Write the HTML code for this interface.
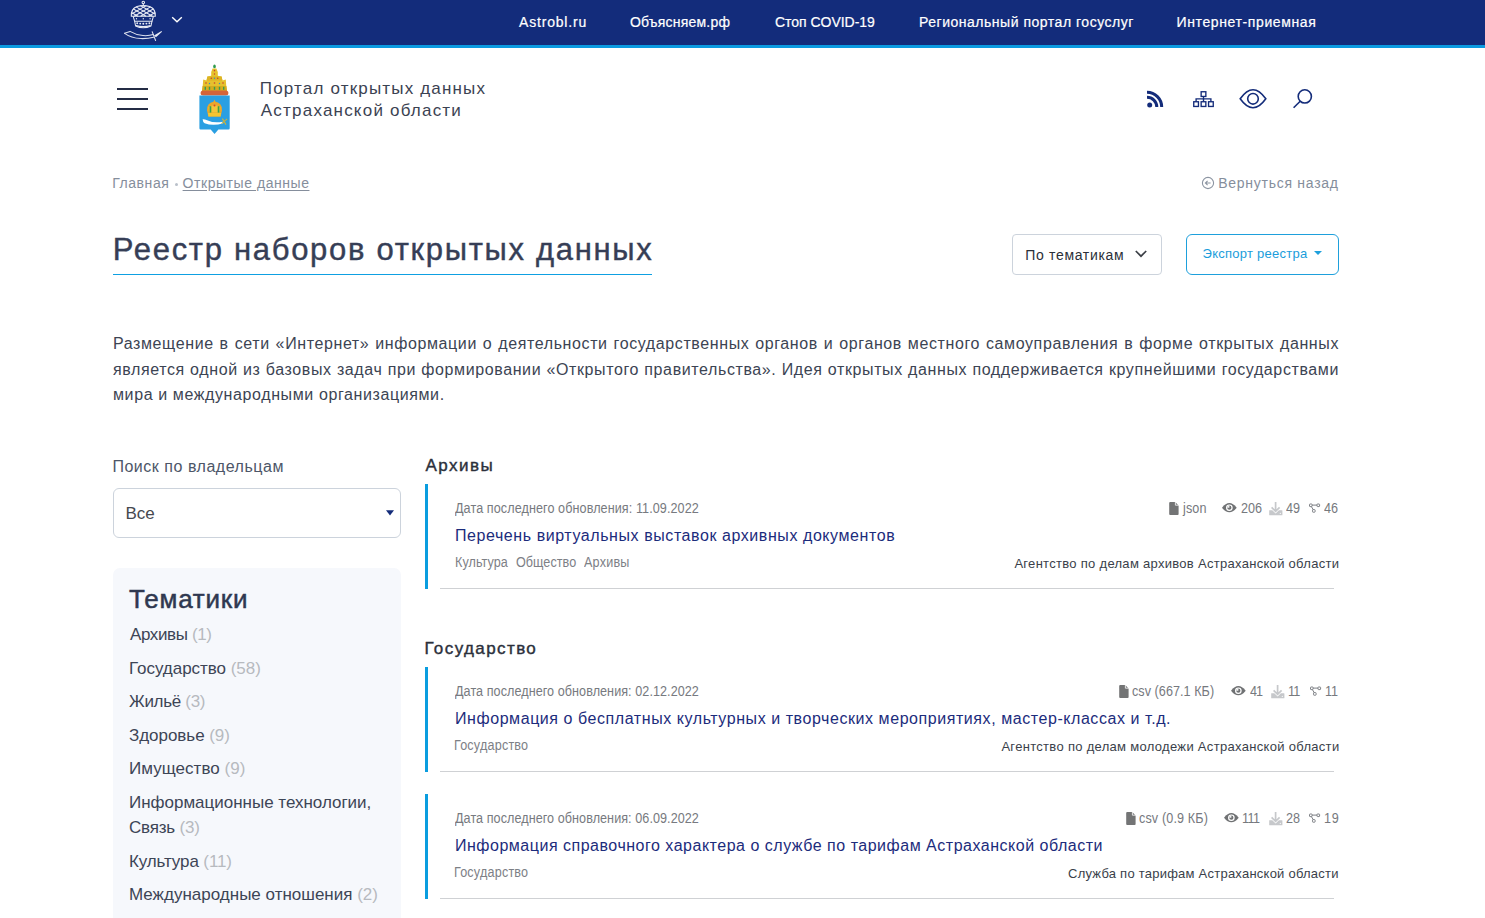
<!DOCTYPE html>
<html lang="ru">
<head>
<meta charset="utf-8">
<title>Реестр наборов открытых данных</title>
<style>
*{box-sizing:border-box;margin:0;padding:0}
html,body{width:1485px;height:918px;overflow:hidden;background:#fff}
body{font-family:"Liberation Sans",sans-serif;position:relative;color:#3a4352}
.ab{position:absolute}
.tx{position:absolute;white-space:nowrap;line-height:1}
.pl{position:absolute;left:113px;white-space:nowrap;font-size:16px;line-height:1;color:#3c4453}
</style>
</head>
<body>
<div class="ab" style="left:0;top:0;width:1485px;height:45px;background:#132c7b"></div>
<div class="ab" style="left:0;top:45px;width:1485px;height:3px;background:#0b9ae0"></div>
<svg class="ab" style="left:110px;top:0" width="60" height="44" viewBox="110 0 60 44">
 <g fill="none" stroke="#e8ebf4" stroke-width="1.05">
  <circle cx="143.3" cy="2.5" r="1.25"/>
  <path d="M143.3 3.8 V5.6"/>
  <path d="M131.3 16.3 Q130.8 9 137 6.6 Q143.3 4.6 149.6 6.6 Q155.8 9 155.3 16.3 Z"/>
  <path d="M133 8.8 L146 16.3 M136 6.9 L152.5 16.3 M140.5 5.6 L155 14 M131.5 12.5 L138 16.3"/>
  <path d="M153.6 8.8 L140.6 16.3 M150.6 6.9 L134.1 16.3 M146.1 5.6 L131.6 14 M155.1 12.5 L148.6 16.3"/>
  <path d="M133.2 16.3 L134.6 21.2 H152 L153.4 16.3"/>
  <path d="M134.6 21.2 L135.6 26 Q143.3 29.6 151 26 L152 21.2"/>
  <path d="M136 25.5 Q143.3 27.8 150.6 25.5"/>
 </g>
 <g fill="#e8ebf4">
  <circle cx="137.2" cy="23.3" r="0.95"/><circle cx="140.2" cy="23.6" r="0.95"/><circle cx="143.3" cy="23.7" r="0.95"/><circle cx="146.4" cy="23.6" r="0.95"/><circle cx="149.4" cy="23.3" r="0.95"/>
  <circle cx="136.5" cy="18.8" r="0.7"/><circle cx="143.3" cy="18.8" r="0.7"/><circle cx="150.1" cy="18.8" r="0.7"/>
 </g>
 <g fill="none" stroke="#dde1ee" stroke-width="1.05" stroke-linecap="round" stroke-linejoin="round">
  <path d="M124.6 33.3 Q131 38 141 38.6 Q148 38.8 153.5 37.2"/>
  <path d="M124.6 33.3 L130 31.4 Q136 35 143 35.6 Q149 36 153.2 34.6"/>
  <path d="M152.2 31.8 L155.6 40.5"/>
 </g>
 <path d="M154 35.5 L161.5 31 L162 31.8 L156 37.3Z" fill="#e8ebf4"/>
</svg>
<svg class="ab" style="left:171px;top:16px" width="12" height="8" viewBox="0 0 12 8"><path d="M1.2 1.2 L6 5.8 L10.8 1.2" fill="none" stroke="#fff" stroke-width="1.4"/></svg>
<div class="ab" style="left:117px;top:88px;width:31px;height:2px;background:#242c45"></div>
<div class="ab" style="left:117px;top:98px;width:31px;height:2px;background:#242c45"></div>
<div class="ab" style="left:117px;top:108px;width:31px;height:2px;background:#242c45"></div>
<svg class="ab" style="left:196px;top:62px" width="38" height="74" viewBox="0 0 38 74">
  <ellipse cx="18.5" cy="4.4" rx="1.3" ry="1.9" fill="#2f9a4d"/>
  <path d="M16.6 6.6 H20.4 L21.8 10 V13.8 L25.6 14.5 L26.5 18.5 L29.8 17.6 L30.2 23 L31 29 H6 L6.8 23 L7.2 17.6 L10.5 18.5 L11.4 14.5 L15.2 13.8 V10 Z" fill="#e6c12e"/>
  <path d="M6.6 24 H30.4 L31 29 H6Z" fill="#d5ac20"/>
  <path d="M11.4 14.5 H25.6 L26.5 18.6 H10.5Z" fill="#dcb425"/>
  <g fill="#c8402c"><circle cx="18.5" cy="8.6" r="0.8"/><circle cx="15.3" cy="16.2" r="0.8"/><circle cx="21.7" cy="16.2" r="0.8"/><circle cx="10" cy="21" r="0.8"/><circle cx="27" cy="21" r="0.8"/><circle cx="18.5" cy="21" r="0.8"/><circle cx="18.5" cy="12" r="0.7"/></g>
  <g fill="#2f8fd0"><circle cx="13.5" cy="21.5" r="0.7"/><circle cx="23.5" cy="21.5" r="0.7"/><circle cx="18.5" cy="16.2" r="0.7"/></g>
  <g fill="#3a9d4a"><rect x="8.6" y="24.8" width="1.4" height="3"/><rect x="12.8" y="24.8" width="1.4" height="3"/><rect x="17.8" y="24.8" width="1.4" height="3"/><rect x="22.8" y="24.8" width="1.4" height="3"/><rect x="27" y="24.8" width="1.4" height="3"/></g>
  <rect x="4.6" y="28.6" width="27.8" height="5" rx="2.5" fill="#d4643a"/>
  <path d="M3.4 33.5 H33.7 V66.2 Q33.7 67.4 32.5 67.4 H22.4 L18.55 72 L14.7 67.4 H4.6 Q3.4 67.4 3.4 66.2 Z" fill="#2a9fe2"/>
  <path d="M11 48.5 Q10.6 40.5 18.5 39.6 Q26.4 40.5 26 48.5 L24.6 54.6 H12.4 Z" fill="#eaa62a"/>
  <path d="M12.6 45 Q18.5 41.5 24.4 45 L23.8 50.5 H13.2Z" fill="#f2c53a"/>
  <path d="M18.5 37.6 L19.6 40 H17.4Z" fill="#eaa62a"/>
  <g fill="#3aa046"><rect x="13.6" y="44.2" width="1.7" height="6.4"/><rect x="21.7" y="44.2" width="1.7" height="6.4"/></g>
  <circle cx="18.5" cy="43.6" r="1" fill="#d6452d"/>
  <path d="M12 51 H25 L24.6 54.6 H12.4Z" fill="#f4c531"/>
  <path d="M6.6 57.2 Q8 57 9 57.6 Q17 61.5 26.6 59.8 L27.2 61.2 Q17 64.5 8.6 61.2 Q6.8 60 6.6 57.2Z" fill="#ffffff"/>
  <path d="M26.4 56.6 L30 62.6 M25.6 61.6 L31.2 56.8" stroke="#c9b23c" stroke-width="1.1"/>
</svg>
<svg class="ab" style="left:1140px;top:84px" width="30" height="30" viewBox="0 0 30 30">
  <circle cx="9.7" cy="20.9" r="2.5" fill="#142c7a"/>
  <path d="M7 13.2 A9.8 9.8 0 0 1 16.8 23" fill="none" stroke="#142c7a" stroke-width="3"/>
  <path d="M7 8.3 A14.7 14.7 0 0 1 21.7 23" fill="none" stroke="#142c7a" stroke-width="3"/>
</svg>
<svg class="ab" style="left:1190px;top:88px" width="28" height="22" viewBox="0 0 28 22">
  <g fill="none" stroke="#142c7a" stroke-width="1.35">
  <rect x="11.15" y="3.75" width="4.7" height="4.7"/>
  <rect x="3.75" y="13.75" width="4.7" height="4.7"/>
  <rect x="11.15" y="13.75" width="4.7" height="4.7"/>
  <rect x="18.55" y="13.75" width="4.7" height="4.7"/>
  <path d="M13.5 8.5 V13.75 M6.1 13.75 V10.9 H20.9 V13.75"/>
  </g>
</svg>
<svg class="ab" style="left:1236px;top:84px" width="34" height="30" viewBox="0 0 34 30">
  <path d="M4.2 14.8 Q17 -3.2 29.8 14.8 Q17 32.8 4.2 14.8 Z" fill="none" stroke="#142c7a" stroke-width="1.6"/>
  <circle cx="17" cy="14.8" r="5.3" fill="none" stroke="#142c7a" stroke-width="1.6"/>
</svg>
<svg class="ab" style="left:1288px;top:84px" width="30" height="30" viewBox="0 0 30 30">
  <circle cx="16.8" cy="12.4" r="6.6" fill="none" stroke="#142c7a" stroke-width="1.6"/>
  <path d="M12.2 17.2 L5.6 23.8" stroke="#142c7a" stroke-width="1.6"/>
</svg>
<div class="ab" style="left:174.5px;top:182.5px;width:3.5px;height:3.5px;border-radius:50%;background:#b9c0ca"></div>
<svg class="ab" style="left:1201px;top:176px" width="14" height="14" viewBox="0 0 14 14"><circle cx="7" cy="7" r="5.6" fill="none" stroke="#8c95a2" stroke-width="1.1"/><path d="M9.6 7 H4.4 M6.6 4.8 L4.4 7 L6.6 9.2" fill="none" stroke="#8c95a2" stroke-width="1.1"/></svg>
<div class="ab" style="left:113px;top:273.5px;width:539px;height:1.3px;background:#0ea0e2"></div>
<div class="ab" style="left:1012px;top:234px;width:150px;height:41px;border:1px solid #ccd3dc;border-radius:4px"></div>
<svg class="ab" style="left:1134px;top:249px" width="14" height="10" viewBox="0 0 14 10"><path d="M1.8 2 L7 7.2 L12.2 2" fill="none" stroke="#3b3f46" stroke-width="1.7"/></svg>
<div class="ab" style="left:1186px;top:234px;width:153px;height:41px;border:1px solid #1ea0dc;border-radius:6px"></div>
<svg class="ab" style="left:1313px;top:250px" width="10" height="6" viewBox="0 0 10 6"><path d="M1 1 H9 L5 5 Z" fill="#1ea0dc"/></svg>
<div class="pl" style="top:336.2px;width:1226px;text-align:justify;text-align-last:justify;letter-spacing:0.606px">Размещение в сети «Интернет» информации о деятельности государственных органов и органов местного самоуправления в форме открытых данных</div>
<div class="pl" style="top:361.6px;width:1226px;text-align:justify;text-align-last:justify;letter-spacing:0.606px">является одной из базовых задач при формировании «Открытого правительства». Идея открытых данных поддерживается крупнейшими государствами</div>
<div id="para3" class="pl" style="top:387.0px;letter-spacing:0.606px">мира и международными организациями.</div>
<div class="ab" style="left:113px;top:488px;width:288px;height:50px;border:1px solid #ccd3dc;border-radius:6px"></div>
<svg class="ab" style="left:385px;top:509px" width="10" height="8" viewBox="0 0 10 8"><path d="M1 1.2 H9 L5 6.5 Z" fill="#142c7a"/></svg>
<div class="ab" style="left:113px;top:568px;width:288px;height:400px;background:#f6f8fc;border-radius:7px"></div>
<div class="ab" style="left:425px;top:484px;width:3px;height:105px;background:#0a9ddf"></div>
<div class="ab" style="left:440px;top:588px;width:894px;height:1px;background:#cfd1d4"></div>
<div class="ab" style="left:425px;top:667px;width:3px;height:105px;background:#0a9ddf"></div>
<div class="ab" style="left:440px;top:771px;width:894px;height:1px;background:#cfd1d4"></div>
<div class="ab" style="left:425px;top:794px;width:3px;height:105px;background:#0a9ddf"></div>
<div class="ab" style="left:440px;top:898px;width:894px;height:1px;background:#cfd1d4"></div>
<svg class="ab" style="left:1168.3px;top:500.8px" width="12" height="15" viewBox="0 0 12 15"><path d="M2.2 1 H7.2 L10.6 4.4 V12.9 Q10.6 13.9 9.6 13.9 H2.2 Q1.2 13.9 1.2 12.9 V2 Q1.2 1 2.2 1Z" fill="#737475"/><path d="M7.4 0.6 V4.2 H11" fill="none" stroke="#fff" stroke-width="0.8"/></svg>
<svg class="ab" style="left:1221.0px;top:501.3px" width="17" height="13" viewBox="0 0 17 13"><path d="M1 6.7 Q8.35 -2.6 15.7 6.7 Q8.35 16 1 6.7Z" fill="#707274"/><circle cx="8.35" cy="6.7" r="3.3" fill="#fff"/><circle cx="8.35" cy="6.7" r="2.1" fill="#707274"/><path d="M8.35 6.7 V4.6 A2.1 2.1 0 0 0 6.25 6.7Z" fill="#fff" opacity="0.9"/></svg>
<svg class="ab" style="left:1268.0px;top:500.5px" width="16" height="16" viewBox="0 0 16 16"><path d="M7.6 1 V10.2 M3.6 6.4 L7.6 10.3 L11.6 6.4" fill="none" stroke="#c6c8cb" stroke-width="1.7"/><path d="M1.3 9.3 H4.3 L7.6 12.4 L10.9 9.3 H14 Q14.4 9.3 14.4 9.8 V14 Q14.4 14.3 14 14.3 H1.7 Q1.2 14.3 1.2 14 V9.8 Q1.2 9.3 1.3 9.3Z" fill="#c6c8cb"/><circle cx="12.3" cy="12.4" r="0.55" fill="#fff"/></svg>
<svg class="ab" style="left:1307.9px;top:503.0px" width="13" height="11" viewBox="0 0 13 11"><g fill="none" stroke="#76797e" stroke-width="0.95"><rect x="1.5" y="1" width="2.6" height="2.6" rx="0.6"/><rect x="9" y="1" width="2.6" height="2.6" rx="0.6"/><rect x="4.5" y="6.6" width="2.6" height="2.6" rx="0.6"/><path d="M4.1 2.1 H9 M3.4 3.6 L5.2 6.6"/></g></svg>
<svg class="ab" style="left:1118.0px;top:683.8px" width="12" height="15" viewBox="0 0 12 15"><path d="M2.2 1 H7.2 L10.6 4.4 V12.9 Q10.6 13.9 9.6 13.9 H2.2 Q1.2 13.9 1.2 12.9 V2 Q1.2 1 2.2 1Z" fill="#737475"/><path d="M7.4 0.6 V4.2 H11" fill="none" stroke="#fff" stroke-width="0.8"/></svg>
<svg class="ab" style="left:1230.2px;top:684.3px" width="17" height="13" viewBox="0 0 17 13"><path d="M1 6.7 Q8.35 -2.6 15.7 6.7 Q8.35 16 1 6.7Z" fill="#707274"/><circle cx="8.35" cy="6.7" r="3.3" fill="#fff"/><circle cx="8.35" cy="6.7" r="2.1" fill="#707274"/><path d="M8.35 6.7 V4.6 A2.1 2.1 0 0 0 6.25 6.7Z" fill="#fff" opacity="0.9"/></svg>
<svg class="ab" style="left:1269.8px;top:683.5px" width="16" height="16" viewBox="0 0 16 16"><path d="M7.6 1 V10.2 M3.6 6.4 L7.6 10.3 L11.6 6.4" fill="none" stroke="#c6c8cb" stroke-width="1.7"/><path d="M1.3 9.3 H4.3 L7.6 12.4 L10.9 9.3 H14 Q14.4 9.3 14.4 9.8 V14 Q14.4 14.3 14 14.3 H1.7 Q1.2 14.3 1.2 14 V9.8 Q1.2 9.3 1.3 9.3Z" fill="#c6c8cb"/><circle cx="12.3" cy="12.4" r="0.55" fill="#fff"/></svg>
<svg class="ab" style="left:1308.9px;top:686.0px" width="13" height="11" viewBox="0 0 13 11"><g fill="none" stroke="#76797e" stroke-width="0.95"><rect x="1.5" y="1" width="2.6" height="2.6" rx="0.6"/><rect x="9" y="1" width="2.6" height="2.6" rx="0.6"/><rect x="4.5" y="6.6" width="2.6" height="2.6" rx="0.6"/><path d="M4.1 2.1 H9 M3.4 3.6 L5.2 6.6"/></g></svg>
<svg class="ab" style="left:1125.1px;top:810.8px" width="12" height="15" viewBox="0 0 12 15"><path d="M2.2 1 H7.2 L10.6 4.4 V12.9 Q10.6 13.9 9.6 13.9 H2.2 Q1.2 13.9 1.2 12.9 V2 Q1.2 1 2.2 1Z" fill="#737475"/><path d="M7.4 0.6 V4.2 H11" fill="none" stroke="#fff" stroke-width="0.8"/></svg>
<svg class="ab" style="left:1223.0px;top:811.3px" width="17" height="13" viewBox="0 0 17 13"><path d="M1 6.7 Q8.35 -2.6 15.7 6.7 Q8.35 16 1 6.7Z" fill="#707274"/><circle cx="8.35" cy="6.7" r="3.3" fill="#fff"/><circle cx="8.35" cy="6.7" r="2.1" fill="#707274"/><path d="M8.35 6.7 V4.6 A2.1 2.1 0 0 0 6.25 6.7Z" fill="#fff" opacity="0.9"/></svg>
<svg class="ab" style="left:1268.1px;top:810.5px" width="16" height="16" viewBox="0 0 16 16"><path d="M7.6 1 V10.2 M3.6 6.4 L7.6 10.3 L11.6 6.4" fill="none" stroke="#c6c8cb" stroke-width="1.7"/><path d="M1.3 9.3 H4.3 L7.6 12.4 L10.9 9.3 H14 Q14.4 9.3 14.4 9.8 V14 Q14.4 14.3 14 14.3 H1.7 Q1.2 14.3 1.2 14 V9.8 Q1.2 9.3 1.3 9.3Z" fill="#c6c8cb"/><circle cx="12.3" cy="12.4" r="0.55" fill="#fff"/></svg>
<svg class="ab" style="left:1308.2px;top:813.0px" width="13" height="11" viewBox="0 0 13 11"><g fill="none" stroke="#76797e" stroke-width="0.95"><rect x="1.5" y="1" width="2.6" height="2.6" rx="0.6"/><rect x="9" y="1" width="2.6" height="2.6" rx="0.6"/><rect x="4.5" y="6.6" width="2.6" height="2.6" rx="0.6"/><path d="M4.1 2.1 H9 M3.4 3.6 L5.2 6.6"/></g></svg>
<div id="n1" class="tx" style="left:519.00px;top:15px;font-size:14px;color:#fff;letter-spacing:0.810px;-webkit-text-stroke:0.2px #fff;">Astrobl.ru</div>
<div id="n2" class="tx" style="left:630.00px;top:15px;font-size:14px;color:#fff;letter-spacing:0.208px;-webkit-text-stroke:0.2px #fff;">Объясняем.рф</div>
<div id="n3" class="tx" style="left:775.00px;top:15px;font-size:14px;color:#fff;letter-spacing:-0.033px;-webkit-text-stroke:0.2px #fff;">Стоп COVID-19</div>
<div id="n4" class="tx" style="left:919.00px;top:15px;font-size:14px;color:#fff;letter-spacing:0.518px;-webkit-text-stroke:0.2px #fff;">Региональный портал госуслуг</div>
<div id="n5" class="tx" style="left:1176.60px;top:15px;font-size:14px;color:#fff;letter-spacing:0.609px;-webkit-text-stroke:0.2px #fff;">Интернет-приемная</div>
<div id="lg1" class="tx" style="left:259.80px;top:79.6px;font-size:17px;color:#3b4252;letter-spacing:1.175px;">Портал открытых данных</div>
<div id="lg2" class="tx" style="left:260.80px;top:101.8px;font-size:17px;color:#3b4252;letter-spacing:1.210px;">Астраханской области</div>
<div id="bc1" class="tx" style="left:112.20px;top:176px;font-size:14px;color:#858e9c;letter-spacing:0.560px;">Главная</div>
<div id="bc2" class="tx" style="left:182.60px;top:176px;font-size:14px;color:#858e9c;letter-spacing:0.545px;text-decoration:underline;text-underline-offset:1.5px;">Открытые данные</div>
<div id="bc3" class="tx" style="left:1218.20px;top:175.8px;font-size:14px;color:#858e9c;letter-spacing:0.734px;">Вернуться назад</div>
<div id="h1" class="tx" style="left:112.80px;top:234.3px;font-size:31px;color:#363e56;letter-spacing:1.688px;-webkit-text-stroke:0.4px #363e56;">Реестр наборов открытых данных</div>
<div id="selt" class="tx" style="left:1025.20px;top:248.2px;font-size:14px;color:#2a2f38;letter-spacing:0.685px;">По тематикам</div>
<div id="expt" class="tx" style="left:1202.60px;top:247px;font-size:13px;color:#1a9ddb;letter-spacing:0.247px;">Экспорт реестра</div>
<div id="lbl" class="tx" style="left:112.40px;top:458.7px;font-size:16px;color:#4d5668;letter-spacing:0.526px;">Поиск по владельцам</div>
<div id="all" class="tx" style="left:125.60px;top:505.3px;font-size:17px;color:#46494f;letter-spacing:-0.131px;">Все</div>
<div id="them" class="tx" style="left:129.00px;top:586.2px;font-size:26px;color:#2f3850;letter-spacing:0.793px;-webkit-text-stroke:0.5px #2f3850;">Тематики</div>
<div id="ti0" class="tx" style="left:130.00px;top:626.3px;font-size:17px;color:#3d4556;letter-spacing:-0.370px;">Архивы <span style="color:#b7babf">(1)</span></div>
<div id="ti1" class="tx" style="left:129.00px;top:659.8px;font-size:17px;color:#3d4556;letter-spacing:-0.031px;">Государство <span style="color:#b7babf">(58)</span></div>
<div id="ti2" class="tx" style="left:129.00px;top:692.6px;font-size:17px;color:#3d4556;letter-spacing:-0.311px;">Жильё <span style="color:#b7babf">(3)</span></div>
<div id="ti3" class="tx" style="left:129.00px;top:726.9px;font-size:17px;color:#3d4556;letter-spacing:-0.041px;">Здоровье <span style="color:#b7babf">(9)</span></div>
<div id="ti4" class="tx" style="left:129.00px;top:759.5px;font-size:17px;color:#3d4556;letter-spacing:0.038px;">Имущество <span style="color:#b7babf">(9)</span></div>
<div id="ti5" class="tx" style="left:129.00px;top:794px;font-size:17px;color:#3d4556;letter-spacing:-0.013px;">Информационные технологии,</div>
<div id="ti6" class="tx" style="left:129.00px;top:818.6px;font-size:17px;color:#3d4556;letter-spacing:-0.200px;">Связь <span style="color:#b7babf">(3)</span></div>
<div id="ti7" class="tx" style="left:129.00px;top:853.1px;font-size:17px;color:#3d4556;letter-spacing:-0.116px;">Культура <span style="color:#b7babf">(11)</span></div>
<div id="ti8" class="tx" style="left:129.00px;top:886.1px;font-size:17px;color:#3d4556;letter-spacing:0.004px;">Международные отношения <span style="color:#b7babf">(2)</span></div>
<div id="sec1" class="tx" style="left:425.40px;top:456.8px;font-size:17px;color:#2b303b;letter-spacing:1.501px;-webkit-text-stroke:0.4px #2b303b;">Архивы</div>
<div id="sec2" class="tx" style="left:424.40px;top:639.8px;font-size:17px;color:#2b303b;letter-spacing:1.407px;-webkit-text-stroke:0.4px #2b303b;">Государство</div>
<div id="c0dt" class="tx" style="left:455.00px;top:501.2px;font-size:14px;color:#777a80;letter-spacing:0.094px;transform:scaleX(0.9);transform-origin:0 0;">Дата последнего обновления: 11.09.2022</div>
<div id="c0tt" class="tx" style="left:455.00px;top:528px;font-size:16px;color:#1c2c7c;letter-spacing:0.571px;">Перечень виртуальных выставок архивных документов</div>
<div id="c0tg0" class="tx" style="left:454.60px;top:555.0px;font-size:14px;color:#7d8086;letter-spacing:0.061px;transform:scaleX(0.9);transform-origin:0 0;">Культура</div>
<div id="c0tg1" class="tx" style="left:515.60px;top:555.0px;font-size:14px;color:#7d8086;letter-spacing:0.046px;transform:scaleX(0.9);transform-origin:0 0;">Общество</div>
<div id="c0tg2" class="tx" style="left:583.80px;top:555.0px;font-size:14px;color:#7d8086;letter-spacing:0.231px;transform:scaleX(0.9);transform-origin:0 0;">Архивы</div>
<div id="c0ow" class="tx" style="left:1014.40px;top:557.3px;font-size:13px;color:#3a3f4a;letter-spacing:0.295px;">Агентство по делам архивов Астраханской области</div>
<div id="c1dt" class="tx" style="left:455.00px;top:684.2px;font-size:14px;color:#777a80;letter-spacing:0.068px;transform:scaleX(0.9);transform-origin:0 0;">Дата последнего обновления: 02.12.2022</div>
<div id="c1tt" class="tx" style="left:455.00px;top:711px;font-size:16px;color:#1c2c7c;letter-spacing:0.562px;">Информация о бесплатных культурных и творческих мероприятиях, мастер-классах и т.д.</div>
<div id="c1tg0" class="tx" style="left:454.20px;top:738.0px;font-size:14px;color:#7d8086;letter-spacing:0.214px;transform:scaleX(0.9);transform-origin:0 0;">Государство</div>
<div id="c1ow" class="tx" style="left:1001.40px;top:740.3px;font-size:13px;color:#3a3f4a;letter-spacing:0.309px;">Агентство по делам молодежи Астраханской области</div>
<div id="c2dt" class="tx" style="left:455.00px;top:811.2px;font-size:14px;color:#777a80;letter-spacing:0.068px;transform:scaleX(0.9);transform-origin:0 0;">Дата последнего обновления: 06.09.2022</div>
<div id="c2tt" class="tx" style="left:455.00px;top:838px;font-size:16px;color:#1c2c7c;letter-spacing:0.510px;">Информация справочного характера о службе по тарифам Астраханской области</div>
<div id="c2tg0" class="tx" style="left:454.20px;top:865.0px;font-size:14px;color:#7d8086;letter-spacing:0.214px;transform:scaleX(0.9);transform-origin:0 0;">Государство</div>
<div id="c2ow" class="tx" style="left:1068.00px;top:867.3px;font-size:13px;color:#3a3f4a;letter-spacing:0.237px;">Служба по тарифам Астраханской области</div>
<div id="s0f" class="tx" style="left:1182.80px;top:500.8px;font-size:14px;color:#76797e;letter-spacing:0.123px;transform:scaleX(0.9);transform-origin:0 0;">json</div>
<div id="s0v" class="tx" style="left:1240.80px;top:500.8px;font-size:14px;color:#76797e;letter-spacing:-0.074px;transform:scaleX(0.9);transform-origin:0 0;">206</div>
<div id="s0d" class="tx" style="left:1286.00px;top:500.8px;font-size:14px;color:#76797e;letter-spacing:-0.111px;transform:scaleX(0.9);transform-origin:0 0;">49</div>
<div id="s0c" class="tx" style="left:1324.40px;top:500.8px;font-size:14px;color:#76797e;letter-spacing:-0.134px;transform:scaleX(0.9);transform-origin:0 0;">46</div>
<div id="s1f" class="tx" style="left:1132.40px;top:683.8px;font-size:14px;color:#76797e;letter-spacing:0.056px;transform:scaleX(0.9);transform-origin:0 0;">csv (667.1 КБ)</div>
<div id="s1v" class="tx" style="left:1249.60px;top:683.8px;font-size:14px;color:#76797e;letter-spacing:-1.189px;transform:scaleX(0.9);transform-origin:0 0;">41</div>
<div id="s1d" class="tx" style="left:1287.80px;top:683.8px;font-size:14px;color:#76797e;letter-spacing:-0.789px;transform:scaleX(0.9);transform-origin:0 0;">11</div>
<div id="s1c" class="tx" style="left:1325.00px;top:683.8px;font-size:14px;color:#76797e;letter-spacing:-0.210px;transform:scaleX(0.9);transform-origin:0 0;">11</div>
<div id="s2f" class="tx" style="left:1139.20px;top:810.8px;font-size:14px;color:#76797e;letter-spacing:0.149px;transform:scaleX(0.9);transform-origin:0 0;">csv (0.9 КБ)</div>
<div id="s2v" class="tx" style="left:1242.40px;top:810.8px;font-size:14px;color:#76797e;letter-spacing:-0.623px;transform:scaleX(0.9);transform-origin:0 0;">111</div>
<div id="s2d" class="tx" style="left:1286.20px;top:810.8px;font-size:14px;color:#76797e;letter-spacing:-0.111px;transform:scaleX(0.9);transform-origin:0 0;">28</div>
<div id="s2c" class="tx" style="left:1324.40px;top:810.8px;font-size:14px;color:#76797e;letter-spacing:0.767px;transform:scaleX(0.9);transform-origin:0 0;">19</div>
</body>
</html>
